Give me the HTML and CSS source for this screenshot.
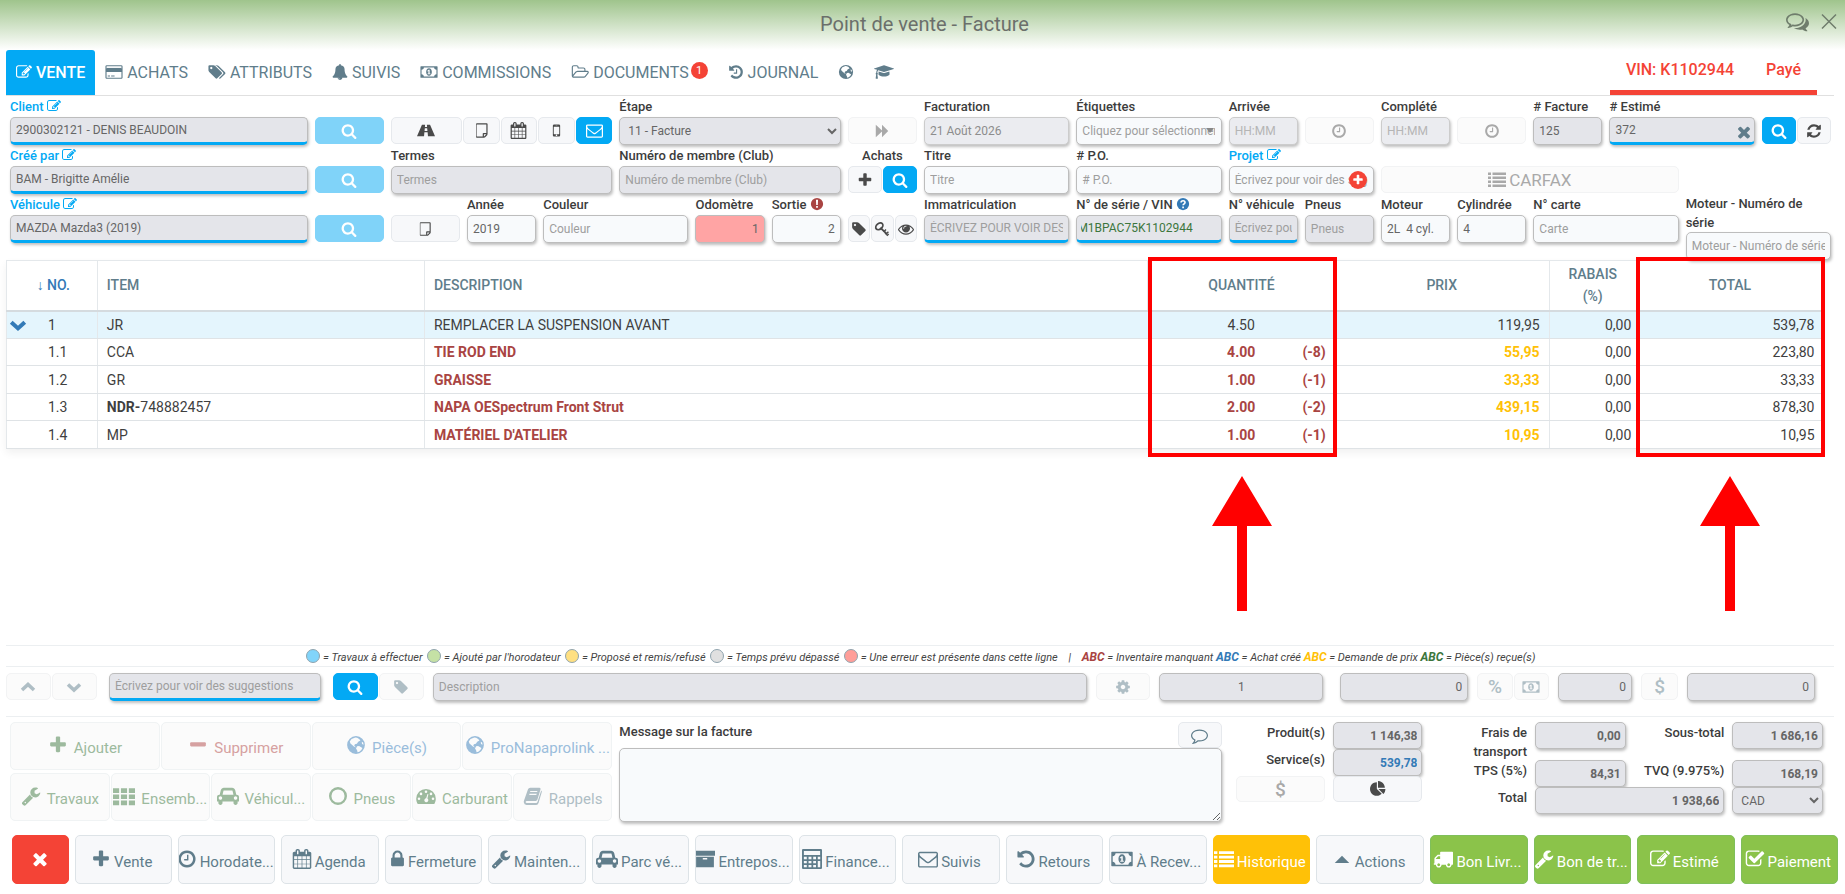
FILE: index.html
```html
<!DOCTYPE html>
<html lang="fr">
<head>
  <meta charset="UTF-8">
  <meta name="viewport" content="width=device-width, initial-scale=1.0">
  <title>Point de vente - Facture</title>
  <link rel="stylesheet" href="styles.css">
</head>
<body>
  <!-- Icon sprite -->
  <svg class="sprite" aria-hidden="true">
    <symbol id="i-edit" viewBox="0 0 1792 1792"><path d="M888 1184l116-116-152-152-116 116v56h96v96h56zm440-720q-16-16-33 1l-350 350q-17 17-1 33t33-1l350-350q17-17 1-33zm80 594v190q0 119-84.500 203.500t-203.500 84.500h-832q-119 0-203.500-84.500t-84.500-203.500v-832q0-119 84.500-203.500t203.500-84.500h832q63 0 117 25 15 7 18 23 3 17-9 29l-49 49q-14 14-32 8-23-6-45-6h-832q-66 0-113 47t-47 113v832q0 66 47 113t113 47h832q66 0 113-47t47-113v-126q0-13 9-22l64-64q15-15 35-7t20 29zm-96-738l288 288-672 672h-288v-288zm444 132l-92 92-288-288 92-92q28-28 68-28t68 28l152 152q28 28 28 68t-28 68z"/></symbol>
    <symbol id="i-search" viewBox="0 0 1792 1792"><path d="M1216 832q0-185-131.500-316.500t-316.500-131.500-316.500 131.500-131.500 316.500 131.500 316.500 316.500 131.500 316.500-131.500 131.500-316.500zm512 832q0 52-38 90t-90 38q-54 0-90-38l-343-342q-179 124-399 124-143 0-273.500-55.500t-225-150-150-225-55.500-273.500 55.500-273.500 150-225 225-150 273.500-55.500 273.500 55.500 225 150 150 225 55.500 273.500q0 220-124 399l343 343q37 37 37 90z"/></symbol>
    <symbol id="i-card" viewBox="0 0 1920 1792"><path fill-rule="evenodd" d="M1760 128q66 0 113 47t47 113v1216q0 66-47 113t-113 47h-1600q-66 0-113-47t-47-113v-1216q0-66 47-113t113-47h1600zm-1600 128q-13 0-22.500 9.500t-9.500 22.500v224h1664v-224q0-13-9.500-22.500t-22.500-9.500h-1600zm1600 1280q13 0 22.500-9.500t9.500-22.500v-608h-1664v608q0 13 9.500 22.500t22.500 9.500h1600zm-1504-128v-128h256v128h-256zm384 0v-128h384v128h-384z"/><path d="M128 440h1664v220h-1664z"/></symbol>
    <symbol id="i-tag" viewBox="0 0 1792 1792"><path d="M576 448q0-53-37.500-90.500t-90.500-37.500-90.500 37.500-37.500 90.500 37.500 90.500 90.500 37.500 90.500-37.500 37.500-90.500zm1067 576q0 53-37 90l-491 492q-39 37-91 37-53 0-90-37l-715-716q-38-37-64.500-101t-26.500-117v-416q0-52 38-90t90-38h416q53 0 117 26.500t102 64.500l715 714q37 39 37 91z"/></symbol>
    <symbol id="i-tags" viewBox="0 0 1920 1792"><path d="M448 448q0-53-37.500-90.500t-90.500-37.500-90.500 37.500-37.500 90.500 37.500 90.500 90.500 37.500 90.500-37.500 37.500-90.500zm1067 576q0 53-37 90l-491 492q-39 37-91 37-53 0-90-37l-715-716q-38-37-64.500-101t-26.500-117v-416q0-52 38-90t90-38h416q53 0 117 26.500t102 64.500l715 714q37 39 37 91zm384 0q0 53-37 90l-491 492q-39 37-91 37-36 0-59-14t-53-45l470-470q37-37 37-90 0-52-37-91l-715-714q-38-38-102-64.500t-117-26.500h224q53 0 117 26.500t102 64.500l715 714q37 39 37 91z"/></symbol>
    <symbol id="i-bell" viewBox="0 0 1792 1792"><path d="M912 1696q0-16-16-16-59 0-101.500-42.500t-42.500-101.500q0-16-16-16t-16 16q0 73 51.500 124.500t124.500 51.500q16 0 16-16zm816-288q0 52-38 90t-90 38h-448q0 106-75 181t-181 75-181-75-75-181h-448q-52 0-90-38t-38-90q50-42 91-88t85-119.500 74.500-158.500 50-206 19.500-260q0-152 117-282.500t307-158.500q-8-19-8-39 0-40 28-68t68-28 68 28 28 68q0 20-8 39 190 28 307 158.500t117 282.500q0 139 19.500 260t50 206 74.500 158.500 85 119.500 91 88z"/></symbol>
    <symbol id="i-money" viewBox="0 0 1920 1792"><path fill-rule="evenodd" d="M0 320q0-64 64-64h1792q64 0 64 64v1152q0 64-64 64h-1792q-64 0-64-64zm384 64q0 106-75 181t-181 75v512q106 0 181 75t75 181h1152q0-106 75-181t181-75v-512q-106 0-181-75t-75-181z"/><path fill-rule="evenodd" d="M960 480c-190 0-320 190-320 416s130 416 320 416 320-190 320-416-130-416-320-416zm-40 160h112v416h88v96h-320v-96h90v-270l-70 60-62-72z"/></symbol>
    <symbol id="i-folder" viewBox="0 0 1973 1792"><path d="M1845 931q0-35-53-35h-1088q-40 0-85.500 21.500t-71.500 52.500l-294 363q-18 24-18 40 0 35 53 35h1088q40 0 86-22t71-53l294-363q18-22 18-39zm-1141-163h768v-160q0-40-28-68t-68-28h-576q-40 0-68-28t-28-68v-64q0-40-28-68t-68-28h-320q-40 0-68 28t-28 68v853l256-315q44-53 116-87.500t140-34.500zm1269 163q0 62-46 120l-295 363q-43 53-116 87.500t-140 34.500h-1088q-92 0-158-66t-66-158v-960q0-92 66-158t158-66h320q92 0 158 66t66 158v32h544q92 0 158 66t66 158v160h192q54 0 99 24.500t67 70.500q15 32 15 68z"/></symbol>
    <symbol id="i-history" viewBox="0 0 1792 1792"><path d="M1664 896q0 156-61 298t-164 245-245 164-298 61q-172 0-327-72.500t-264-204.500q-7-10-6.500-22.500t8.500-20.500l137-138q10-9 25-9 16 2 23 12 73 95 179 147t225 52q104 0 198.500-40.500t163.500-109.500 109.500-163.500 40.500-198.500-40.500-198.500-109.500-163.500-163.500-109.500-198.500-40.500q-98 0-188 35.500t-160 101.500l137 138q31 30 14 69-17 40-59 40h-448q-26 0-45-19t-19-45v-448q0-42 40-59 39-17 69 14l130 129q107-101 244.500-156.500t284.500-55.500q156 0 298 61t245 164 164 245 61 298zm-640-288v448q0 14-9 23t-23 9h-320q-14 0-23-9t-9-23v-64q0-14 9-23t23-9h224v-352q0-14 9-23t23-9h64q14 0 23 9t9 23z"/></symbol>
    <symbol id="i-undo" viewBox="0 0 1792 1792"><path d="M1664 896q0 156-61 298t-164 245-245 164-298 61q-172 0-327-72.500t-264-204.500q-7-10-6.500-22.500t8.500-20.500l137-138q10-9 25-9 16 2 23 12 73 95 179 147t225 52q104 0 198.500-40.500t163.500-109.500 109.500-163.500 40.500-198.500-40.500-198.500-109.500-163.500-163.500-109.500-198.500-40.500q-98 0-188 35.500t-160 101.500l137 138q31 30 14 69-17 40-59 40h-448q-26 0-45-19t-19-45v-448q0-42 40-59 39-17 69 14l130 129q107-101 244.500-156.500t284.500-55.500q156 0 298 61t245 164 164 245 61 298z"/></symbol>
    <symbol id="i-globe" viewBox="0 0 18 18"><path fill-rule="evenodd" d="M9 1a8 8 0 1 0 0 16a8 8 0 1 0 0-16zM8.400 2.200L10 2.400l1.800 1.100L13 5l-2 1-1.200 1.800-1.800.6-.6 1.400L9 11l-1.400-.2L5.600 9 4 7.600 3.400 5.800 5 3.600zM10 10.200l1.800-.4 2.200 1.400.8.4-1 1.800-1.800 1.600-1.600.6-.4-1.800-1-1.600zM14.200 6l1.200.8.4 2-1.400-.6z"/></symbol>
    <symbol id="i-grad" viewBox="0 0 2304 1792"><path d="M1774 836l18 316q4 69-82 128t-235 93.500-323 34.500-323-34.500-235-93.500-82-128l18-316 574 181q22 7 48 7t48-7zm530-324q0 23-22 31l-1120 352q-4 1-10 1t-10-1l-652-206q-43 34-71 111.500t-34 178.500q63 36 63 109 0 69-58 107l58 433q2 14-8 25-9 11-24 11h-192q-15 0-24-11-10-11-8-25l58-433q-58-38-58-107 0-73 65-111 11-207 98-330l-333-104q-22-8-22-31t22-31l1120-352q4-1 10-1t10 1l1120 352q22 8 22 31z"/></symbol>
    <symbol id="i-comments" viewBox="0 0 1792 1792"><path d="M704 384q-153 0-286 52t-211.500 141-78.500 191q0 82 53 158t149 132l97 56-35 84q34-20 62-39l44-31 53 10q78 14 153 14 153 0 286-52t211.500-141 78.500-191-78.500-191-211.500-141-286-52zm0-128q191 0 353.500 68.500t256.500 186.500 94 257-94 257-256.500 186.500-353.500 68.500q-86 0-176-16-124 88-278 128-36 9-86 16h-3q-11 0-20.500-8t-11.500-21q-1-3-1-6.500t.5-6.500 2-6l2.500-5 3.500-5.500 4-5 4.500-5 4-4.500q5-6 23-25t26-29.500 22.500-29 25-38.500 20.500-44q-124-72-195-177t-71-224q0-139 94-257t256.500-186.500 353.500-68.500zm822 1169q10 24 20.500 44t25 38.500 22.500 29 26 29.500 23 25q1 1 4 4.500t4.500 5 4 5 3.500 5.500l2.500 5 2 6 .5 6.500-1 6.500q-3 14-13 22t-22 7q-50-7-86-16-154-40-278-128-90 16-176 16-271 0-472-132 58 4 88 4 161 0 309-45t264-129q125-92 192-212t67-254q0-77-23-152 129 71 204 178t75 230q0 120-71 224.500t-195 176.500z"/></symbol>
    <symbol id="i-comment" viewBox="0 0 1792 1792"><path d="M896 384q-204 0-381.500 69.500t-282 187.500-104.500 255q0 112 71.500 213.500t201.500 175.500l87 50-27 96q-24 91-70 172 152-63 275-171l43-38 57 6q69 8 130 8 204 0 381.500-69.500t282-187.500 104.500-255-104.500-255-282-187.500-381.500-69.500zm896 512q0 174-120 321.500t-326 233-450 85.500q-70 0-145-8-198 175-460 242-49 14-114 22h-5q-15 0-27-10.500t-16-27.500v-1q-3-4-.5-12t2-10 4.500-9.500l6-9 7-8.500 8-9q7-8 31-34.500t34.500-38 31-39.500 32.500-51 27-59 26-76q-157-89-247.500-220t-90.500-281q0-174 120-321.500t326-233 450-85.500 450 85.500 326 233 120 321.500z"/></symbol>
    <symbol id="i-close" viewBox="0 0 16 16"><path d="M1 1l14 14M15 1L1 15" fill="none" stroke="currentColor" stroke-width="1.500"/></symbol>
    <symbol id="i-road" viewBox="0 0 20 16"><path d="M5.500 1.500H9L8.800 4h2.400L11 1.500h3.500L20 14.500h-7.800l-.4-4.500H8.200l-.4 4.500H0zM8.700 5.500L8.400 8.500h3.200l-.3-3z" fill-rule="evenodd"/></symbol>
    <symbol id="i-note" viewBox="0 0 1792 1792"><path d="M1400 1280h-248v248q29-10 41-22l185-185q12-12 22-41zm-280-128h288v-896h-1024v1280h640v-288q0-40 28-68t68-28zm416-928v1024q0 40-20 88t-48 76l-184 184q-28 28-76 48t-88 20h-704q-40 0-68-28t-28-68v-1344q0-40 28-68t68-28h1024q40 0 68 28t28 68z"/></symbol>
    <symbol id="i-calendar" viewBox="0 0 1792 1792"><path d="M192 1664h288v-288h-288v288zm352 0h320v-288h-320v288zm-352-352h288v-320h-288v320zm352 0h320v-320h-320v320zm-352-384h288v-288h-288v288zm736 736h320v-288h-320v288zm-384-736h320v-288h-320v288zm768 736h288v-288h-288v288zm-384-352h320v-320h-320v320zm-352-864v-288q0-13-9.500-22.500t-22.500-9.500h-64q-13 0-22.500 9.500t-9.500 22.500v288q0 13 9.500 22.500t22.500 9.500h64q13 0 22.500-9.500t9.500-22.500zm736 864h288v-320h-288v320zm-384-384h320v-288h-320v288zm384 0h288v-288h-288v288zm32-480v-288q0-13-9.500-22.500t-22.500-9.500h-64q-13 0-22.500 9.500t-9.500 22.500v288q0 13 9.500 22.500t22.500 9.500h64q13 0 22.500-9.500t9.500-22.500zm384-64v1280q0 52-38 90t-90 38h-1408q-52 0-90-38t-38-90v-1280q0-52 38-90t90-38h128v-96q0-66 47-113t113-47h64q66 0 113 47t47 113v96h384v-96q0-66 47-113t113-47h64q66 0 113 47t47 113v96h128q52 0 90 38t38 90z"/></symbol>
    <symbol id="i-mobile" viewBox="0 0 1792 1792"><path d="M976 1408q0-33-23.500-56.500t-56.500-23.500-56.500 23.500-23.500 56.500 23.500 56.500 56.500 23.500 56.500-23.500 23.500-56.500zm208-160v-704q0-13-9.500-22.500t-22.500-9.500h-512q-13 0-22.500 9.500t-9.500 22.500v704q0 13 9.500 22.500t22.500 9.500h512q13 0 22.500-9.500t9.500-22.500zm-192-848q0-16-16-16h-160q-16 0-16 16t16 16h160q16 0 16-16zm288-16v1024q0 52-38 90t-90 38h-512q-52 0-90-38t-38-90v-1024q0-52 38-90t90-38h512q52 0 90 38t38 90z"/></symbol>
    <symbol id="i-mail" viewBox="0 0 1792 1792"><path d="M1664 1504v-768q-32 36-69 66-268 206-426 338-51 43-83 67t-86.500 48.500-102.500 24.500h-2q-48 0-102.500-24.500t-86.500-48.500-83-67q-158-132-426-338-37-30-69-66v768q0 13 9.500 22.500t22.500 9.500h1472q13 0 22.500-9.500t9.500-22.500zm0-1051v-24.500l-.5-13-3-12.500-5.500-9-9-7.500-14-2.500h-1472q-13 0-22.500 9.500t-9.500 22.500q0 168 147 284 193 152 401 317 6 5 35 29.500t46 37.500 44.500 31.500 50.500 27.500 43 9h2q20 0 43-9t50.500-27.500 44.500-31.500 46-37.500 35-29.500q208-165 401-317 54-43 100.500-115.500t46.500-131.500zm128-37v1088q0 66-47 113t-113 47h-1472q-66 0-113-47t-47-113v-1088q0-66 47-113t113-47h1472q66 0 113 47t47 113z"/></symbol>
    <symbol id="i-forward" viewBox="0 0 18 18"><path d="M2 2l7 6.500V2l7 7-7 7V9.500L2 16z"/></symbol>
    <symbol id="i-clock" viewBox="0 0 1792 1792"><path d="M1024 544v448q0 14-9 23t-23 9h-320q-14 0-23-9t-9-23v-64q0-14 9-23t23-9h224v-352q0-14 9-23t23-9h64q14 0 23 9t9 23zm416 352q0-148-73-273t-198-198-273-73-273 73-198 198-73 273 73 273 198 198 273 73 273-73 198-198 73-273zm224 0q0 209-103 385.500t-279.500 279.500-385.500 103-385.500-103-279.500-279.500-103-385.500 103-385.500 279.500-279.500 385.500-103 385.500 103 279.500 279.500 103 385.500z"/></symbol>
    <symbol id="i-times" viewBox="0 0 1792 1792"><path d="M1490 1322q0 40-28 68l-136 136q-28 28-68 28t-68-28l-294-294-294 294q-28 28-68 28t-68-28l-136-136q-28-28-28-68t28-68l294-294-294-294q-28-28-28-68t28-68l136-136q28-28 68-28t68 28l294 294 294-294q28-28 68-28t68 28l136 136q28 28 28 68t-28 68l-294 294 294 294q28 28 28 68z"/></symbol>
    <symbol id="i-refresh" viewBox="0 0 1792 1792"><path d="M1639 1056q0 5-1 7-64 268-268 434.500t-478 166.500q-146 0-282.500-55t-243.500-157l-129 129q-19 19-45 19t-45-19-19-45v-448q0-26 19-45t45-19h448q26 0 45 19t19 45-19 45l-137 137q71 66 161 102t187 36q134 0 250-65t186-179q11-17 53-117 8-23 30-23h192q13 0 22.500 9.500t9.500 22.500zm25-800v448q0 26-19 45t-45 19h-448q-26 0-45-19t-19-45 19-45l138-138q-148-137-349-137-134 0-250 65t-186 179q-11 17-53 117-8 23-30 23h-199q-13 0-22.500-9.500t-9.500-22.500v-7q65-268 270-434.500t480-166.500q146 0 284 55.500t245 156.500l130-129q19-19 45-19t45 19 19 45z"/></symbol>
    <symbol id="i-plus" viewBox="0 0 1792 1792"><path d="M1600 736v192q0 40-28 68t-68 28h-416v416q0 40-28 68t-68 28h-192q-40 0-68-28t-28-68v-416h-416q-40 0-68-28t-28-68v-192q0-40 28-68t68-28h416v-416q0-40 28-68t68-28h192q40 0 68 28t28 68v416h416q40 0 68 28t28 68z"/></symbol>
    <symbol id="i-minus" viewBox="0 0 1792 1792"><path d="M1600 736v192q0 40-28 68t-68 28h-1216q-40 0-68-28t-28-68v-192q0-40 28-68t68-28h1216q40 0 68 28t28 68z"/></symbol>
    <symbol id="i-key" viewBox="0 0 18 18"><path d="M7.200 7.600L14 14.200" fill="none" stroke="currentColor" stroke-width="2"/><ellipse cx="6" cy="6" rx="4.500" ry="3.200" transform="rotate(-40 6 6)" fill="none" stroke="currentColor" stroke-width="2"/><path d="M13.500 9.500l-2.500 2.500M16.200 12.200l-2.500 2.500M12.500 13.500l2.500 2.500 1.500-1.500" fill="none" stroke="currentColor" stroke-width="1.600"/></symbol>
    <symbol id="i-eye" viewBox="0 0 1792 1792"><path d="M1664 960q-152-236-381-353 61 104 61 225 0 185-131.500 316.500t-316.500 131.500-316.500-131.500-131.500-316.500q0-121 61-225-229 117-381 353 133 205 333.500 326.500t434.500 121.500 434.500-121.500 333.500-326.500zm-720-384q0-20-14-34t-34-14q-125 0-214.500 89.500t-89.500 214.500q0 20 14 34t34 14 34-14 14-34q0-86 61-147t147-61q20 0 34-14t14-34zm848 384q0 34-20 69-140 230-376.500 368.500t-499.500 138.500-499.500-139-376.500-368q-20-35-20-69t20-69q140-229 376.500-368t499.500-139 499.500 139 376.500 368q20 35 20 69z"/></symbol>
    <symbol id="i-list" viewBox="0 0 18 16"><path d="M0 1h3v2.500H0zM4.500 1H18v2.500H4.500zM0 5h3v2.500H0zM4.500 5H18v2.500H4.500zM0 9h3v2.500H0zM4.500 9H18v2.500H4.500zM0 13h3v2.500H0zM4.500 13H18v2.500H4.500z"/></symbol>
    <symbol id="i-warn" viewBox="0 0 16 16"><path fill-rule="evenodd" d="M8 1a7 7 0 1 0 0 14A7 7 0 1 0 8 1zM6.800 3h2.400l-.3 6H7.100zM7 10.200h2v2.100H7z"/></symbol>
    <symbol id="i-help" viewBox="0 0 16 16"><circle cx="8" cy="8" r="7"/><path d="M5.800 6.400C5.800 3.500 10.400 3.600 10.300 6.300c0 1.500-2.200 1.500-2.200 3.200M8.100 10.800v2" fill="none" stroke="#fff" stroke-width="1.900"/></symbol>
    <symbol id="i-chev-down" viewBox="0 0 16 16"><path d="M2 5.500l6 5.500 6-5.500" fill="none" stroke="currentColor" stroke-width="3.600"/></symbol>
    <symbol id="i-chev-up" viewBox="0 0 16 16"><path d="M2 11l6-5.500 6 5.500" fill="none" stroke="currentColor" stroke-width="3.600"/></symbol>
    <symbol id="i-cog" viewBox="0 0 1792 1792"><path d="M1152 896q0-106-75-181t-181-75-181 75-75 181 75 181 181 75 181-75 75-181zm512-109v222q0 12-8 23t-20 13l-185 28q-19 54-39 91 35 50 107 138 10 12 10 25t-9 23q-27 37-99 108t-94 71q-12 0-26-9l-138-108q-44 23-91 38-16 136-29 186-7 28-36 28h-222q-14 0-24.500-8.500t-11.500-21.500l-28-184q-49-16-90-37l-141 107q-10 9-25 9-14 0-25-11-126-114-165-168-7-10-7-23 0-12 8-23 15-21 51-66.500t54-70.500q-27-50-41-99l-183-27q-13-2-21-12.500t-8-23.500v-222q0-12 8-23t19-13l186-28q14-46 39-92-40-57-107-138-10-12-10-24 0-10 9-23 26-36 98.500-107.500t94.500-71.500q13 0 26 10l138 107q44-23 91-38 16-136 29-186 7-28 36-28h222q14 0 24.500 8.500t11.500 21.500l28 184q49 16 90 37l142-107q9-9 24-9 13 0 25 10 129 119 165 170 7 8 7 22 0 12-8 23-15 21-51 66.500t-54 70.500q26 50 41 98l183 28q13 2 21 12.500t8 23.500z"/></symbol>
    <symbol id="i-wrench" viewBox="0 0 1792 1792"><path d="M448 1472q0-26-19-45t-45-19-45 19-19 45 19 45 45 19 45-19 19-45zm644-420l-682 682q-37 37-90 37-52 0-91-37l-106-108q-38-36-38-90 0-53 38-91l681-681q39 98 114.500 173.500t173.500 114.500zm634-435q0 39-23 106-47 134-164.500 217.500t-258.500 83.500q-185 0-316.500-131.500t-131.500-316.500 131.500-316.500 316.500-131.500q58 0 121.500 16.500t107.500 46.500q16 11 16 28t-16 28l-293 169v224l193 107q5-3 79-48.500t135.500-81 70.500-35.500q15 0 23.500 10t8.500 25z"/></symbol>
    <symbol id="i-th" viewBox="0 0 20 18"><path d="M0 2h5.600v4.200H0zM7.200 2h5.600v4.200H7.200zM14.400 2H20v4.200h-5.600zM0 7.600h5.600v4.200H0zM7.200 7.600h5.600v4.200H7.200zM14.400 7.600H20v4.200h-5.600zM0 13.200h5.600v4.200H0zM7.200 13.200h5.600v4.200H7.200zM14.400 13.200H20v4.200h-5.600z"/></symbol>
    <symbol id="i-car" viewBox="0 0 2048 1792"><path d="M480 1088q0-66-47-113t-113-47-113 47-47 113 47 113 113 47 113-47 47-113zm36-320h1016l-89-357q-2-8-14-17.500t-21-9.500h-768q-9 0-21 9.500t-14 17.500zm1372 320q0-66-47-113t-113-47-113 47-47 113 47 113 113 47 113-47 47-113zm160-96v384q0 14-9 23t-23 9h-96v128q0 80-56 136t-136 56-136-56-56-136v-128h-1024v128q0 80-56 136t-136 56-136-56-56-136v-128h-96q-14 0-23-9t-9-23v-384q0-93 65.500-158.500t158.500-65.500h28l105-419q23-94 104-157.500t179-63.500h768q98 0 179 63.500t104 157.500l105 419h28q93 0 158.500 65.500t65.500 158.500z"/></symbol>
    <symbol id="i-circle" viewBox="0 0 18 18"><circle cx="9" cy="9" r="7" fill="none" stroke="currentColor" stroke-width="2.200"/></symbol>
    <symbol id="i-gauge" viewBox="0 0 20 18"><path fill-rule="evenodd" d="M10 2A9.800 9.800 0 0 0 .2 11.800c0 2 .6 3.700 1.500 5.200h16.600c.9-1.500 1.500-3.200 1.500-5.200A9.800 9.800 0 0 0 10 2zM10 3.400a1.300 1.300 0 1 1 0 2.600 1.300 1.300 0 1 1 0-2.600zM5 5.600a1.300 1.300 0 1 1 0 2.600 1.300 1.300 0 1 1 0-2.600zM15 5.600a1.300 1.300 0 1 1 0 2.600 1.300 1.300 0 1 1 0-2.600zM3 10.500a1.300 1.300 0 1 1 0 2.600 1.300 1.300 0 1 1 0-2.600zM17 10.500a1.300 1.300 0 1 1 0 2.600 1.300 1.300 0 1 1 0-2.600zM11.500 7l.9.300-1 4.200a2 2 0 1 1-1.200-.3z"/></symbol>
    <symbol id="i-book" viewBox="0 0 18 18"><path fill-rule="evenodd" d="M6.500 1.500h8.300q1.300.1 1 1.400L13 12.200q-.4 1.200-1.600 1.200H3.200q-.9.200-.9 1 .2.800 1.200.8h8.300q.9 0 1.200-.8L16.400 4q.8.500.5 1.500l-2.900 9.800Q13.500 17 11.800 17H3.200Q1 16.800.7 14.600q-.1-.9.300-1.800L4.500 3q.5-1.500 2-1.500zM6.600 4.400L6.300 5.500h6.400l.3-1.100zM5.900 6.900L5.600 8H12l.3-1.100z"/></symbol>
    <symbol id="i-lock" viewBox="320 0 1152 1792"><path d="M640 768h512v-192q0-106-75-181t-181-75-181 75-75 181v192zm832 96v576q0 40-28 68t-68 28h-960q-40 0-68-28t-28-68v-576q0-40 28-68t68-28h32v-192q0-184 132-316t316-132 316 132 132 316v192h32q40 0 68 28t28 68z"/></symbol>
    <symbol id="i-archive" viewBox="0 0 18 18"><path fill-rule="evenodd" d="M0 1.500h18V6H0zM1 7h16v9.500H1zM7 8v1.400h4V8z"/></symbol>
    <symbol id="i-calc" viewBox="0 0 18 18"><path fill-rule="evenodd" d="M1 0h16q1 0 1 1v16q0 1-1 1H1q-1 0-1-1V1q0-1 1-1zM1.700 1.700v3.600h14.600V1.700zM1.700 7v2.200h2.600V7zM5.900 7v2.200h2.600V7zM10.100 7v2.200h2.500V7zM14.200 7v2.200h2.200V7zM1.700 10.700v2.100h2.600v-2.100zM5.900 10.700v2.100h2.600v-2.100zM10.100 10.700v2.100h2.500v-2.100zM1.700 14.300v2.100h2.600v-2.100zM5.900 14.300v2.100h2.600v-2.100zM10.100 14.300v2.100h2.500v-2.100zM14.200 10.700v5.700h2.200v-5.700z"/></symbol>
    <symbol id="i-up" viewBox="1 0 16 18"><path d="M2.500 12.500L9 6l6.500 6.500z"/></symbol>
    <symbol id="i-truck" viewBox="0 0 1792 1792"><path d="M640 1408q0-52-38-90t-90-38-90 38-38 90 38 90 90 38 90-38 38-90zm-384-512h384v-256h-158q-13 0-22 9l-195 195q-9 9-9 22v30zm1280 512q0-52-38-90t-90-38-90 38-38 90 38 90 90 38 90-38 38-90zm256-1088v1024q0 15-4 26.500t-13.500 18.500-16.500 11.500-23.500 6-22.500 2-25.500 0-22.500-.5q0 106-75 181t-181 75-181-75-75-181h-384q0 106-75 181t-181 75-181-75-75-181h-64q-3 0-22.500.5t-25.500 0-22.500-2-23.500-6-16.500-11.500-13.500-18.500-4-26.500q0-26 19-45t45-19v-320q0-8-.5-35t0-38 2.500-34.500 6.500-37 14-30.500 22.500-30l198-198q19-19 50.500-32t58.500-13h160v-192q0-26 19-45t45-19h1024q26 0 45 19t19 45z"/></symbol>
    <symbol id="i-check" viewBox="0 0 1792 1792"><path d="M1472 930v318q0 119-84.500 203.500t-203.500 84.500h-832q-119 0-203.500-84.500t-84.500-203.500v-832q0-119 84.500-203.500t203.500-84.500h832q63 0 117 25 15 7 18 23 3 17-9 29l-49 49q-10 10-23 10-3 0-9-2-23-6-45-6h-832q-66 0-113 47t-47 113v832q0 66 47 113t113 47h832q66 0 113-47t47-113v-254q0-13 9-22l64-64q10-10 23-10 6 0 12 3 20 8 20 29zm231-489l-814 814q-24 24-57 24t-57-24l-430-430q-24-24-24-57t24-57l110-110q24-24 57-24t57 24l263 263 647-647q24-24 57-24t57 24l110 110q24 24 24 57t-24 57z"/></symbol>
    <symbol id="i-pie" viewBox="0 0 1792 1792"><path d="M768 890l546 546q-106 108-247.500 168t-298.500 60q-209 0-385.500-103t-279.500-279.500-103-385.500 103-385.500 279.500-279.500 385.500-103v762zm187 6h773q0 157-60 298.500t-168 247.500zm709-128h-768v-768q209 0 385.500 103t279.500 279.500 103 385.500z"/></symbol>
  </svg>

  <header class="title-bar">
    <h1>Point de vente - Facture</h1>
    <div class="title-actions">
      <button type="button" aria-label="Commentaires"><svg class="icon"><use href="#i-comments"/></svg></button>
      <button type="button" aria-label="Fermer"><svg class="icon close"><use href="#i-close"/></svg></button>
    </div>
  </header>

  <nav class="tabs">
    <a href="#" class="active"><svg class="icon"><use href="#i-edit"/></svg> VENTE</a>
    <a href="#"><svg class="icon wide"><use href="#i-card"/></svg> ACHATS</a>
    <a href="#"><svg class="icon wide"><use href="#i-tags"/></svg> ATTRIBUTS</a>
    <a href="#"><svg class="icon"><use href="#i-bell"/></svg> SUIVIS</a>
    <a href="#"><svg class="icon wide"><use href="#i-money"/></svg> COMMISSIONS</a>
    <a href="#"><svg class="icon wide"><use href="#i-folder"/></svg> DOCUMENTS <span class="badge">1</span></a>
    <a href="#"><svg class="icon"><use href="#i-history"/></svg> JOURNAL</a>
    <a href="#" aria-label="Web"><svg class="icon"><use href="#i-globe"/></svg></a>
    <a href="#" aria-label="Formation"><svg class="icon cap"><use href="#i-grad"/></svg></a>
    <div class="status"><span>VIN: K1102944</span><span>Payé</span></div>
  </nav>

  <form class="invoice-form">
    <div class="row">
      <div class="field w4">
        <label class="link" for="client">Client <svg class="icon"><use href="#i-edit"/></svg></label>
        <input class="lookup" id="client" value="2900302121 - DENIS BEAUDOIN" readonly>
      </div>
      <div class="field"><button class="btn blue off" type="button" aria-label="Rechercher client"><svg class="icon"><use href="#i-search"/></svg></button></div>
      <div class="field w3">
        <div class="btn-group contact">
          <button class="btn" type="button" aria-label="Itinéraire"><svg class="icon wide"><use href="#i-road"/></svg></button>
          <button class="btn" type="button" aria-label="Note"><svg class="icon"><use href="#i-note"/></svg></button>
          <button class="btn" type="button" aria-label="Calendrier"><svg class="icon"><use href="#i-calendar"/></svg></button>
          <button class="btn" type="button" aria-label="Mobile"><svg class="icon"><use href="#i-mobile"/></svg></button>
          <button class="btn blue" type="button" aria-label="Courriel"><svg class="icon"><use href="#i-mail"/></svg></button>
        </div>
      </div>
      <div class="field w3">
        <label for="etape">Étape</label>
        <select id="etape"><option>11 - Facture</option></select>
      </div>
      <div class="field"><button class="btn" type="button" disabled aria-label="Étape suivante"><svg class="icon"><use href="#i-forward"/></svg></button></div>
      <div class="field w2">
        <label for="facturation">Facturation</label>
        <input id="facturation" value="21 Août 2026" disabled>
      </div>
      <div class="field w2">
        <label for="etiquettes">Étiquettes</label>
        <input id="etiquettes" class="tight" placeholder="Cliquez pour sélectionner">
        <span class="caret"></span>
      </div>
      <div class="field">
        <label for="arrivee">Arrivée</label>
        <input id="arrivee" placeholder="HH:MM" disabled>
      </div>
      <div class="field"><button class="btn" type="button" disabled aria-label="Heure d'arrivée"><svg class="icon"><use href="#i-clock"/></svg></button></div>
      <div class="field">
        <label for="complete">Complété</label>
        <input id="complete" placeholder="HH:MM" disabled>
      </div>
      <div class="field"><button class="btn" type="button" disabled aria-label="Heure complétée"><svg class="icon"><use href="#i-clock"/></svg></button></div>
      <div class="field">
        <label for="facture"># Facture</label>
        <input id="facture" value="125" readonly>
      </div>
      <div class="field w2">
        <label for="estime"># Estimé</label>
        <input id="estime" class="lookup" value="372" readonly>
        <button class="clear" type="button" aria-label="Effacer"><svg class="icon"><use href="#i-times"/></svg></button>
      </div>
      <div class="field">
        <div class="btn-group">
          <button class="btn blue" type="button" aria-label="Rechercher estimé"><svg class="icon"><use href="#i-search"/></svg></button>
          <button class="btn" type="button" aria-label="Rafraîchir"><svg class="icon"><use href="#i-refresh"/></svg></button>
        </div>
      </div>
    </div>

    <div class="row">
      <div class="field w4">
        <label class="link" for="cree">Créé par <svg class="icon"><use href="#i-edit"/></svg></label>
        <input class="lookup" id="cree" value="BAM - Brigitte Amélie" readonly>
      </div>
      <div class="field"><button class="btn blue off" type="button" aria-label="Rechercher employé"><svg class="icon"><use href="#i-search"/></svg></button></div>
      <div class="field w3">
        <label for="termes">Termes</label>
        <input id="termes" placeholder="Termes" readonly>
      </div>
      <div class="field w3">
        <label for="membre">Numéro de membre (Club)</label>
        <input id="membre" placeholder="Numéro de membre (Club)" readonly>
      </div>
      <div class="field">
        <span class="caption">Achats</span>
        <div class="btn-group">
          <button class="btn" type="button" aria-label="Ajouter achat"><svg class="icon"><use href="#i-plus"/></svg></button>
          <button class="btn blue" type="button" aria-label="Rechercher achat"><svg class="icon"><use href="#i-search"/></svg></button>
        </div>
      </div>
      <div class="field w2">
        <label for="titre">Titre</label>
        <input id="titre" placeholder="Titre">
      </div>
      <div class="field w2">
        <label for="po"># P.O.</label>
        <input id="po" placeholder="# P.O.">
      </div>
      <div class="field w2">
        <label class="link" for="projet">Projet <svg class="icon"><use href="#i-edit"/></svg></label>
        <input id="projet" placeholder="Écrivez pour voir des suggestions">
        <button class="add" type="button" aria-label="Ajouter projet"><svg class="icon"><use href="#i-plus"/></svg></button>
      </div>
      <div class="field w4"><button class="btn carfax" type="button" disabled><svg class="icon wide"><use href="#i-list"/></svg> CARFAX</button></div>
    </div>

    <div class="row">
      <div class="field w4">
        <label class="link" for="vehicule">Véhicule <svg class="icon"><use href="#i-edit"/></svg></label>
        <input class="lookup" id="vehicule" value="MAZDA Mazda3 (2019)" readonly>
      </div>
      <div class="field"><button class="btn blue off" type="button" aria-label="Rechercher véhicule"><svg class="icon"><use href="#i-search"/></svg></button></div>
      <div class="field"><button class="btn" type="button" aria-label="Note véhicule"><svg class="icon"><use href="#i-note"/></svg></button></div>
      <div class="field">
        <label for="annee">Année</label>
        <input id="annee" value="2019">
      </div>
      <div class="field w2">
        <label for="couleur">Couleur</label>
        <input id="couleur" placeholder="Couleur">
      </div>
      <div class="field">
        <label for="odometre">Odomètre</label>
        <input id="odometre" class="num error" value="1">
      </div>
      <div class="field">
        <label for="sortie">Sortie <svg class="icon warn"><use href="#i-warn"/></svg></label>
        <input id="sortie" class="num" value="2">
      </div>
      <div class="field">
        <div class="btn-group">
          <button class="btn" type="button" aria-label="Étiquette"><svg class="icon"><use href="#i-tag"/></svg></button>
          <button class="btn" type="button" aria-label="Clé"><svg class="icon"><use href="#i-key"/></svg></button>
          <button class="btn" type="button" aria-label="Voir"><svg class="icon"><use href="#i-eye"/></svg></button>
        </div>
      </div>
      <div class="field w2">
        <label for="immat">Immatriculation</label>
        <input id="immat" class="lookup" placeholder="ÉCRIVEZ POUR VOIR DES SUGGESTIONS" readonly>
      </div>
      <div class="field w2">
        <label for="serie">N° de série / VIN <svg class="icon help"><use href="#i-help"/></svg></label>
        <input id="serie" class="lookup vin" value="M1BPAC75K1102944" readonly>
      </div>
      <div class="field">
        <label for="noveh">N° véhicule</label>
        <input id="noveh" class="lookup" placeholder="Écrivez pour voir" readonly>
      </div>
      <div class="field">
        <label for="pneus">Pneus</label>
        <input id="pneus" placeholder="Pneus" readonly>
      </div>
      <div class="field">
        <label for="moteur">Moteur</label>
        <input id="moteur" value="2L  4 cyl.">
      </div>
      <div class="field">
        <label for="cylindree">Cylindrée</label>
        <input id="cylindree" value="4">
      </div>
      <div class="field w2">
        <label for="carte">N° carte</label>
        <input id="carte" placeholder="Carte">
      </div>
      <div class="field w2 tall">
        <label for="noserie">Moteur - Numéro de série</label>
        <input id="noserie" placeholder="Moteur - Numéro de série">
      </div>
    </div>
  </form>

  <main class="lines">
    <table>
      <colgroup>
        <col class="c-no"><col class="c-item"><col><col class="c-qty"><col class="c-price"><col class="c-rebate"><col class="c-total">
      </colgroup>
      <thead>
        <tr>
          <th class="no sorted">↓ NO.</th>
          <th>ITEM</th>
          <th>DESCRIPTION</th>
          <th class="mid">QUANTITÉ</th>
          <th class="mid">PRIX</th>
          <th class="mid">RABAIS (%)</th>
          <th class="mid">TOTAL</th>
        </tr>
      </thead>
      <tbody>
        <tr class="selected">
          <td class="no"><div class="no-cell"><svg class="icon"><use href="#i-chev-down"/></svg><span>1</span></div></td>
          <td>JR</td><td>REMPLACER LA SUSPENSION AVANT</td>
          <td><div class="qty"><span>4.50</span></div></td>
          <td class="num">119,95</td><td class="num">0,00</td><td class="num">539,78</td>
        </tr>
        <tr>
          <td class="no"><div class="no-cell"><i></i><span>1.1</span></div></td>
          <td>CCA</td><td class="missing">TIE ROD END</td>
          <td class="missing"><div class="qty"><span>4.00</span><span>(-8)</span></div></td>
          <td class="num asked">55,95</td><td class="num">0,00</td><td class="num">223,80</td>
        </tr>
        <tr>
          <td class="no"><div class="no-cell"><i></i><span>1.2</span></div></td>
          <td>GR</td><td class="missing">GRAISSE</td>
          <td class="missing"><div class="qty"><span>1.00</span><span>(-1)</span></div></td>
          <td class="num asked">33,33</td><td class="num">0,00</td><td class="num">33,33</td>
        </tr>
        <tr>
          <td class="no"><div class="no-cell"><i></i><span>1.3</span></div></td>
          <td><b>NDR-</b>748882457</td><td class="missing">NAPA OESpectrum Front Strut</td>
          <td class="missing"><div class="qty"><span>2.00</span><span>(-2)</span></div></td>
          <td class="num asked">439,15</td><td class="num">0,00</td><td class="num">878,30</td>
        </tr>
        <tr>
          <td class="no"><div class="no-cell"><i></i><span>1.4</span></div></td>
          <td>MP</td><td class="missing">MATÉRIEL D'ATELIER</td>
          <td class="missing"><div class="qty"><span>1.00</span><span>(-1)</span></div></td>
          <td class="num asked">10,95</td><td class="num">0,00</td><td class="num">10,95</td>
        </tr>
      </tbody>
    </table>
    <!-- Highlights over the quantity and total columns -->
    <div class="mark mark-qty"><svg viewBox="0 0 60 135"><path d="M30 0l30 50H35v85H25V50H0z"/></svg></div>
    <div class="mark mark-total"><svg viewBox="0 0 60 135"><path d="M30 0l30 50H35v85H25V50H0z"/></svg></div>
  </main>

  <div class="legend">
    <span class="dot todo"></span> = Travaux à effectuer
    <span class="dot clocked"></span> = Ajouté par l'horodateur
    <span class="dot refused"></span> = Proposé et remis/refusé
    <span class="dot late"></span> = Temps prévu dépassé
    <span class="dot fault"></span> = Une erreur est présente dans cette ligne
    <span class="sep">|</span>
    <b class="missing">ABC</b> = Inventaire manquant <b class="bought">ABC</b> = Achat créé <b class="asked">ABC</b> = Demande de prix <b class="received">ABC</b> = Pièce(s) reçue(s)
  </div>

  <div class="item-bar">
    <div class="btn-group">
      <button class="btn" type="button" disabled aria-label="Monter"><svg class="icon"><use href="#i-chev-up"/></svg></button>
      <button class="btn" type="button" disabled aria-label="Descendre"><svg class="icon"><use href="#i-chev-down"/></svg></button>
    </div>
    <input class="lookup code" placeholder="Écrivez pour voir des suggestions" aria-label="Item" readonly>
    <div class="btn-group">
      <button class="btn blue" type="button" aria-label="Rechercher item"><svg class="icon"><use href="#i-search"/></svg></button>
      <button class="btn" type="button" disabled aria-label="Étiquette item"><svg class="icon"><use href="#i-tag"/></svg></button>
    </div>
    <input placeholder="Description" aria-label="Description" readonly>
    <button class="btn" type="button" disabled aria-label="Options"><svg class="icon"><use href="#i-cog"/></svg></button>
    <input class="center" value="1" aria-label="Quantité" readonly>
    <input class="num price" value="0" aria-label="Prix" readonly>
    <div class="btn-group">
      <button class="btn sign" type="button" disabled>%</button>
      <button class="btn" type="button" disabled aria-label="Montant"><svg class="icon wide"><use href="#i-money"/></svg></button>
    </div>
    <input class="num" value="0" aria-label="Rabais" readonly>
    <button class="btn sign" type="button" disabled>$</button>
    <input class="num" value="0" aria-label="Total" readonly>
  </div>

  <section class="bottom">
    <div class="tools">
      <div class="tool-row">
        <button class="green" type="button" disabled><svg class="icon"><use href="#i-plus"/></svg>Ajouter</button>
        <button class="red" type="button" disabled><svg class="icon"><use href="#i-minus"/></svg>Supprimer</button>
        <button class="azure" type="button" disabled><svg class="icon"><use href="#i-globe"/></svg>Pièce(s)</button>
        <button class="azure" type="button" disabled><svg class="icon"><use href="#i-globe"/></svg>ProNapaprolink ...</button>
      </div>
      <div class="tool-row">
        <button class="green" type="button" disabled><svg class="icon"><use href="#i-wrench"/></svg>Travaux</button>
        <button class="green" type="button" disabled><svg class="icon wide"><use href="#i-th"/></svg>Ensemb...</button>
        <button class="green" type="button" disabled><svg class="icon wide"><use href="#i-car"/></svg>Véhicul...</button>
        <button class="green" type="button" disabled><svg class="icon"><use href="#i-circle"/></svg>Pneus</button>
        <button class="green" type="button" disabled><svg class="icon"><use href="#i-gauge"/></svg>Carburant</button>
        <button class="slate" type="button" disabled><svg class="icon"><use href="#i-book"/></svg>Rappels</button>
      </div>
    </div>
    <div class="message">
      <div class="message-head">
        <label for="message">Message sur la facture</label>
        <button class="btn" type="button" aria-label="Commentaire"><svg class="icon"><use href="#i-comment"/></svg></button>
      </div>
      <textarea id="message"></textarea>
    </div>
    <div class="totals">
      <div class="sums">
        <label for="produits">Produit(s)</label><input id="produits" class="num" value="1 146,38" readonly>
        <label for="services">Service(s)</label><input id="services" class="num bought" value="539,78" readonly>
        <button class="btn sign" type="button" disabled>$</button>
        <button class="btn" type="button" aria-label="Répartition"><svg class="icon"><use href="#i-pie"/></svg></button>
      </div>
      <div class="taxes">
        <label for="transport">Frais de transport</label><input id="transport" class="num" value="0,00" readonly>
        <label for="soustotal">Sous-total</label><input id="soustotal" class="num" value="1 686,16" readonly>
        <label for="tps">TPS (5%)</label><input id="tps" class="num" value="84,31" readonly>
        <label for="tvq">TVQ (9.975%)</label><input id="tvq" class="num" value="168,19" readonly>
        <label for="total">Total</label><input id="total" class="num total" value="1 938,66" readonly>
        <select aria-label="Devise"><option>CAD</option></select>
      </div>
    </div>
  </section>

  <footer class="actions">
    <button class="cancel" type="button" aria-label="Annuler"><svg class="icon"><use href="#i-times"/></svg></button>
    <button type="button"><svg class="icon"><use href="#i-plus"/></svg>Vente</button>
    <button type="button"><svg class="icon"><use href="#i-clock"/></svg>Horodate...</button>
    <button type="button"><svg class="icon"><use href="#i-calendar"/></svg>Agenda</button>
    <button type="button"><svg class="icon slim"><use href="#i-lock"/></svg>Fermeture</button>
    <button type="button"><svg class="icon"><use href="#i-wrench"/></svg>Mainten...</button>
    <button type="button"><svg class="icon wide"><use href="#i-car"/></svg>Parc vé...</button>
    <button type="button"><svg class="icon"><use href="#i-archive"/></svg>Entrepos...</button>
    <button type="button"><svg class="icon"><use href="#i-calc"/></svg>Finance...</button>
    <button type="button"><svg class="icon"><use href="#i-mail"/></svg>Suivis</button>
    <button type="button"><svg class="icon"><use href="#i-undo"/></svg>Retours</button>
    <button type="button"><svg class="icon wide"><use href="#i-money"/></svg>À Recev...</button>
    <button class="amber" type="button"><svg class="icon"><use href="#i-list"/></svg>Historique</button>
    <button class="menu" type="button"><svg class="icon"><use href="#i-up"/></svg>Actions</button>
    <button class="go" type="button"><svg class="icon"><use href="#i-truck"/></svg>Bon Livr...</button>
    <button class="go" type="button"><svg class="icon"><use href="#i-wrench"/></svg>Bon de tr...</button>
    <button class="go" type="button"><svg class="icon"><use href="#i-edit"/></svg>Estimé</button>
    <button class="go" type="button"><svg class="icon"><use href="#i-check"/></svg>Paiement</button>
  </footer>
</body>
</html>
```
FILE: styles.css
```css
* {
  box-sizing: border-box;
}
body {
  margin: 0;
  min-height: 100vh;
  display: flex;
  flex-direction: column;
  font-family: Roboto, Arial, sans-serif;
  font-size: 14px;
  color: #444;
  background: #fff;
}
input, select, textarea, button {
  font-family: inherit;
  margin: 0;
}
button {
  cursor: pointer;
}
.sprite {
  display: none;
}
.icon {
  width: 1em;
  height: 1em;
  fill: currentColor;
  vertical-align: -2px;
  flex-shrink: 0;
}
.icon.wide {
  width: 18px;
}
.icon.cap {
  width: 20px;
}

/* Title bar */
.title-bar {
  position: relative;
  height: 50px;
  padding-left: 4px;
  background: linear-gradient(#9fc48c, #fff);
}
.title-bar h1 {
  margin: 0;
  font-size: 20px;
  line-height: 48px;
  font-weight: 400;
  text-align: center;
  color: #6b6f6b;
}
.title-actions {
  position: absolute;
  top: 10px;
  right: 8px;
  display: flex;
  align-items: center;
  gap: 12px;
}
.title-actions button {
  padding: 0;
  border: 0;
  background: none;
  color: #6f7d6c;
  font-size: 23px;
}
.title-actions .close {
  width: 16px;
}

/* Tabs */
.tabs {
  display: flex;
  height: 46px;
  margin: 0 11px 0 6px;
  border-bottom: 1px solid #e0e0e0;
}
.tabs a {
  padding: 0 10px;
  font-size: 16px;
  line-height: 45px;
  color: #607d8b;
  text-decoration: none;
  white-space: nowrap;
}
.tabs a.active {
  background: #03a9f4;
  color: #fff;
  font-weight: 500;
  border-radius: 3px 3px 0 0;
}
.badge {
  display: inline-block;
  width: 17px;
  height: 17px;
  border-radius: 50%;
  background: #f44336;
  color: #fff;
  font-size: 11px;
  line-height: 17px;
  text-align: center;
  vertical-align: 4px;
  margin-left: -2px;
}
.status {
  display: flex;
  margin-left: auto;
  margin-right: 17px;
  border-bottom: 5px solid #f44336;
}
.status span {
  padding: 0 16px;
  color: #f44336;
  font-size: 16px;
  font-weight: 500;
  line-height: 40px;
}

/* Fields */
.invoice-form {
  height: 164px;
  padding: 0 14px 0 10px;
}
.row {
  display: grid;
  grid-template-columns: repeat(24, minmax(0, 1fr));
  grid-template-rows: 49px;
  column-gap: 7px;
}
.field {
  position: relative;
  display: flex;
  flex-direction: column;
  justify-content: flex-end;
}
.w2 { grid-column: span 2; }
.w3 { grid-column: span 3; }
.w4 { grid-column: span 4; }
label, .caption {
  font-size: 13px;
  font-weight: 500;
  line-height: 20px;
  color: #3c3c3c;
  white-space: nowrap;
}
.caption {
  text-align: center;
}
label.link {
  color: #03a9f4;
}
label .icon {
  width: 14px;
  height: 14px;
}
.warn {
  color: #a94442;
}
.help {
  color: #337ab7;
}
.tall {
  height: 66px;
}
.tall label, .taxes label {
  white-space: normal;
}
.tall label {
  line-height: 19px;
}
input, select {
  width: 100%;
  min-width: 0;
  height: 28px;
  padding: 0 5px;
  border: 1px solid #bdbdbd;
  border-radius: 5px;
  background: #f8fafc;
  box-shadow: 1px 2px 3px rgba(0, 0, 0, 0.25);
  color: #666;
  font-size: 12px;
  outline: none;
}
input::placeholder {
  color: #9e9e9e;
}
input:read-only, select {
  background: #e4e5ea;
}
input:disabled {
  background: #ebecf0;
  border-color: #ccc;
  color: #8d8d8d;
}
input:disabled::placeholder {
  color: #b5b5b5;
}
select {
  padding: 0 4px;
}
.lookup {
  border-bottom: 3px solid #03a9f4;
}
input.num {
  text-align: right;
}
input.center {
  text-align: center;
}
input.error {
  background: #ffa4a4;
}
input.vin {
  color: #3c763d;
  direction: rtl;
  padding: 0 28px 0 4px;
}
input.tight {
  padding-right: 6px;
}
.caret {
  position: absolute;
  right: 8px;
  bottom: 12px;
  border: 4px solid transparent;
  border-top: 5px solid #888;
  border-bottom: 0;
}
.clear, .add {
  position: absolute;
  right: 2px;
  bottom: 4px;
  padding: 0;
  border: 0;
  background: none;
  color: #607d8b;
  font-size: 18px;
  line-height: 16px;
}
.add {
  right: 7px;
  bottom: 5px;
  width: 18px;
  height: 18px;
  border-radius: 50%;
  background: #f44336;
  color: #fff;
  font-size: 12px;
}

/* Small buttons */
.btn {
  display: flex;
  align-items: center;
  justify-content: center;
  width: 100%;
  height: 27px;
  padding: 0;
  border: 1px solid #e6e9ed;
  border-radius: 5px;
  background: #f7f8fa;
  color: #4a4a4a;
  font-size: 16px;
}
.field .btn {
  margin-bottom: 1px;
}
.btn.blue {
  background: #03a9f4;
  border-color: #03a9f4;
  color: #fff;
}
.btn.off {
  opacity: 0.5;
}
.btn:disabled {
  border-color: #f2f3f4;
  background: #fbfbfb;
  color: #a9a9a9;
}
.btn.carfax {
  gap: 3px;
  font-size: 17px;
}
.btn-group {
  display: flex;
  gap: 1px;
}
.contact .btn {
  flex: 1;
  font-size: 17px;
}
.contact .btn:first-child {
  flex: 2;
}

/* Invoice lines */
.lines {
  position: relative;
  flex: 1;
  margin: 0 21px 0 6px;
}
table {
  width: 100%;
  table-layout: fixed;
  border-collapse: collapse;
  box-shadow: 0 4px 8px rgba(0, 0, 0, 0.06);
}
.c-no { width: 5%; }
.c-item { width: 18%; }
.c-qty { width: 10.3%; }
.c-price { width: 11.8%; }
.c-rebate { width: 4.8%; }
.c-total { width: 10.3%; }
th, td {
  border-bottom: 1px solid #dfe3e6;
  padding: 0 9px;
  text-align: left;
}
th {
  height: 50px;
  border: 1px solid #e4e8eb;
  border-bottom: 2px solid #d5dbdf;
  color: #607d8b;
  font-weight: 500;
  line-height: 22px;
}
td {
  height: 28px;
  line-height: 26px;
  color: #3f3f3f;
  white-space: nowrap;
}
tr:nth-child(even) td {
  height: 27px;
}
td:nth-child(-n+3), td:nth-child(6) {
  border-left: 1px solid #e4e8eb;
}
td:nth-child(3) {
  border-right: 0;
}
th.mid {
  text-align: center;
}
th:nth-child(4), th:nth-child(5) {
  border-left: 0;
  border-right: 0;
}
th.no {
  padding-right: 27px;
  text-align: right;
}
th.sorted {
  color: #337ab7;
}
td.no {
  padding: 0 2px;
}
.no-cell {
  display: grid;
  grid-template-columns: 20px 1fr;
  column-gap: 19px;
  align-items: center;
}
.no-cell .icon {
  width: 18px;
  height: 18px;
  color: #337ab7;
}
td.num {
  text-align: right;
}
td:nth-child(6) {
  padding-right: 5px;
}
.selected td {
  background: #e4f5fd;
}
.missing, td.missing {
  color: #a94442;
  font-weight: 700;
}
.asked, td.asked {
  color: #ffc107;
  font-weight: 700;
}
.qty {
  display: grid;
  grid-template-columns: 1fr auto 1fr;
}
.qty span:first-child {
  grid-column: 2;
}
.qty span:last-child:not(:first-child) {
  text-align: right;
}
.mark {
  position: absolute;
  z-index: 2;
  top: -3px;
  height: 200px;
  border: 4px solid #f00;
  pointer-events: none;
}
.mark-qty {
  left: 62.8%;
  width: 10.4%;
}
.mark-total {
  right: -1px;
  width: 10.4%;
}
.mark svg {
  position: absolute;
  top: 215px;
  left: 50%;
  width: 60px;
  height: 135px;
  margin-left: -30px;
  fill: #f00;
}

/* Legend */
.legend {
  height: 22px;
  margin: 0 11px 0 6px;
  border-top: 1px solid #eceff1;
  border-bottom: 1px solid #eceff1;
  font-size: 11px;
  font-style: italic;
  line-height: 23px;
  text-align: center;
}
.legend b {
  font-size: 12px;
}
.dot {
  display: inline-block;
  width: 14px;
  height: 14px;
  margin-left: 2px;
  border: 1px solid #90a4ae;
  border-radius: 50%;
  vertical-align: -2px;
}
.todo { background: #81d4fa; }
.clocked { background: #c5e1a5; }
.refused { background: #ffe082; }
.late { background: #e0e0e0; }
.fault { background: #ff9e99; }
.sep {
  margin: 0 8px;
}
.bought, input.bought {
  color: #337ab7;
}
.received {
  color: #3c763d;
}

/* Item entry */
.item-bar {
  display: grid;
  grid-template-columns:
    minmax(0, 91fr) minmax(0, 218fr) minmax(0, 91fr) minmax(0, 655fr)
    minmax(0, 54fr) minmax(0, 164fr) minmax(0, 136fr) minmax(0, 72fr)
    minmax(0, 74fr) minmax(0, 37fr) minmax(0, 128fr);
  column-gap: 9px;
  height: 50px;
  margin: 0 11px 0 6px;
  padding: 6px 19px 0 0;
  border-bottom: 1px solid #eceff1;
}
.item-bar .btn:disabled {
  color: #afbec5;
}
.code {
  width: auto;
  margin: 0 3px;
}
.price {
  width: auto;
  margin-left: 8px;
}
.btn.sign {
  font-size: 19px;
  font-weight: 500;
}

/* Tools, message and totals */
.bottom {
  display: grid;
  grid-template-columns: repeat(3, minmax(0, 1fr));
  column-gap: 7px;
  padding: 5px 14px 0 10px;
  height: 118px;
}
.tools {
  display: flex;
  flex-direction: column;
  gap: 3px;
}
.tool-row {
  display: flex;
  gap: 1px;
}
.tool-row button {
  flex: 1 1 0;
  min-width: 0;
  height: 48px;
  padding: 0;
  border: 1px solid #f0f3f4;
  border-radius: 5px;
  background: #fbfbfb;
  font-size: 15px;
  white-space: nowrap;
  overflow: hidden;
}
.tool-row .icon, .actions .icon {
  width: 20px;
  height: 20px;
  margin-right: 6px;
  vertical-align: -2px;
}
.tool-row .icon.wide, .actions .icon.wide {
  width: 22px;
}
.actions .icon {
  margin: 0 3px 0 -3px;
}
.actions .icon.slim {
  width: 13px;
  margin: 0 4px 0 0;
}
.green { color: #9dba9e; }
.red { color: #d6a1a1; }
.azure { color: #9abddb; }
.slate { color: #afbec5; }
.message {
  display: flex;
  flex-direction: column;
}
.message-head {
  display: flex;
  justify-content: space-between;
}
.message-head .btn {
  width: 44px;
  height: 26px;
  font-size: 17px;
  color: #607d8b;
}
textarea {
  width: 100%;
  height: 74px;
  border: 1px solid #bdbdbd;
  border-radius: 5px;
  background: #f8fafc;
  box-shadow: 1px 2px 3px rgba(0, 0, 0, 0.25);
}
.totals {
  display: grid;
  grid-template-columns: 187fr 387fr;
  column-gap: 14px;
  padding: 0 8px 0 7px;
}
.sums, .taxes {
  display: grid;
  column-gap: 8px;
  align-content: start;
}
.sums {
  grid-template-columns: repeat(2, minmax(0, 1fr));
  grid-auto-rows: 27px;
}
.taxes {
  grid-template-columns: repeat(4, minmax(0, 1fr));
  grid-template-rows: 38px 27px 27px;
}
.totals label {
  padding-top: 1px;
  line-height: 19px;
  text-align: right;
}
.totals input, .totals select {
  height: 27px;
}
.totals input {
  padding-right: 4px;
  font-weight: 700;
}
.totals .total {
  grid-column: span 2;
}
.totals .btn {
  height: 26px;
}

/* Action buttons */
.actions {
  display: flex;
  gap: 6px;
  padding: 0 7px 10px 12px;
}
.actions button {
  flex: 98 1 0;
  min-width: 0;
  height: 49px;
  padding: 0;
  border: 1px solid #dde3e7;
  border-radius: 5px;
  background: #f7f8fa;
  color: #607d8b;
  font-size: 15px;
  white-space: nowrap;
  overflow: hidden;
}
.actions .menu {
  flex-grow: 109;
}
.actions .cancel {
  flex-grow: 56;
  background: #f44336;
  border-color: #f44336;
  color: #fff;
}
.actions .cancel .icon {
  margin: 0;
}
.actions .amber {
  background: #ffc107;
  border-color: #ffc107;
  color: #fff;
}
.actions .go {
  background: #8bc34a;
  border-color: #7fbf5a;
  color: #fff;
}
```
